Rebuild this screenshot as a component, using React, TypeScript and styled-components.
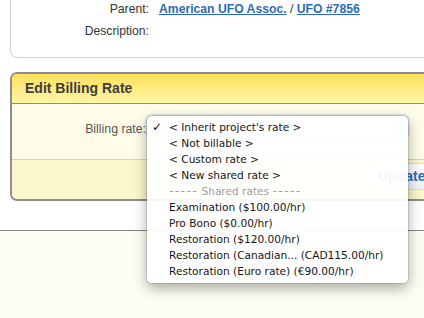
import React from 'react';
import styled, {createGlobalStyle} from 'styled-components';

const GlobalStyle = createGlobalStyle`
	html, body {
		margin: 0;
		padding: 0;
		background: #fdfdf3;
	}
	body {
		font-family: "Liberation Sans", Arial, sans-serif;
	}
`;

const rates = [
	{label: '< Inherit project\'s rate >', checked: true},
	{label: '< Not billable >'},
	{label: '< Custom rate >'},
	{label: '< New shared rate >'},
	{label: 'Shared rates', disabled: true},
	{label: 'Examination ($100.00/hr)'},
	{label: 'Pro Bono ($0.00/hr)'},
	{label: 'Restoration ($120.00/hr)'},
	{label: 'Restoration (Canadian... (CAD115.00/hr)'},
	{label: 'Restoration (Euro rate) (€90.00/hr)'},
];

export default function App() {
	return <Page>
		<GlobalStyle/>
		<Upper>
			<InfoCard>
				<InfoLabel>Parent:</InfoLabel>
				<InfoValue>
					<Link>American UFO Assoc.</Link> / <Link>UFO #7856</Link>
				</InfoValue>
				<InfoLabel>Description:</InfoLabel>
				<InfoValue/>
			</InfoCard>

			<BillingBox>
				<BoxHeader>Edit Billing Rate</BoxHeader>
				<BoxBody>
					<FieldLabel>Billing rate:</FieldLabel>
					<SelectWrap>
						<Select>
							<SelectArrows>⬍</SelectArrows>
						</Select>
						<Popup>
							{rates.map((r) => (
								<Option key={r.label} $disabled={!!r.disabled}>
									{r.checked && <Check>✓</Check>}
									{r.disabled
										? <><Dashes>-----</Dashes> {r.label} <Dashes>-----</Dashes></>
										: r.label}
								</Option>
							))}
						</Popup>
					</SelectWrap>
				</BoxBody>
				<BoxFooter>
					<UpdateButton>Update</UpdateButton>
				</BoxFooter>
			</BillingBox>
		</Upper>
		<Lower/>
	</Page>;
}

const Page = styled.div`
	width: 424px;
	height: 318px;
	overflow: hidden;
	display: flex;
	flex-direction: column;
	background: #fdfdf3;
`

const Upper = styled.div`
	width: 480px;
	background: #fff;
	border-bottom: 1px solid #858585;
	padding: 0 0 29px 10px;
	box-sizing: border-box;
`

const InfoCard = styled.div`
	margin-top: -2px;
	display: grid;
	grid-template-columns: 138px 1fr;
	column-gap: 10px;
	padding-bottom: 15px;
	border: 1px solid #d0d0d0;
	border-top: none;
	border-right: none;
	border-bottom-left-radius: 7px;
	font-size: 12.2px;
	line-height: 22px;
	color: #333;
`

const InfoLabel = styled.div`
	text-align: right;
`

const InfoValue = styled.div`
	white-space: nowrap;
	color: #333;
`

const Link = styled.a`
	color: #2b6cb8;
	font-weight: bold;
	text-decoration: underline;
	cursor: pointer;
`

const BillingBox = styled.div`
	margin-top: 14px;
	border: 2px solid #8c8c8c;
	border-right: none;
	border-radius: 7px 0 0 7px;
`

const BoxHeader = styled.div`
	height: 29px;
	line-height: 29px;
	padding-left: 13px;
	background: linear-gradient(#fce15c, #fff5a6);
	border-bottom: 1px solid #8c8c8c;
	border-top-left-radius: 5px;
	font-size: 14px;
	font-weight: bold;
	color: #3d3d3d;
`

const BoxBody = styled.div`
	display: flex;
	align-items: center;
	padding: 12px 0 22px;
	background: #fffde9;
	border-bottom: 1px solid #d2d2c4;
`

const FieldLabel = styled.div`
	width: 134px;
	text-align: right;
	font-size: 12.3px;
	color: #555;
	padding-top: 5px;
`

const SelectWrap = styled.div`
	position: relative;
	margin-left: 1px;
`

const Select = styled.div`
	width: 261px;
	height: 21px;
	box-sizing: border-box;
	border: 1px solid #a9c5ea;
	border-radius: 5px;
	background: #fff;
	box-shadow: 0 0 0 2px rgba(140, 180, 230, 0.3);
	display: flex;
	align-items: center;
	justify-content: flex-end;
	padding-right: 7px;
`

const SelectArrows = styled.span`
	font-size: 9px;
	color: #c4c4c4;
`

const Popup = styled.div`
	position: absolute;
	top: 0;
	left: 0;
	z-index: 2;
	width: 261px;
	box-sizing: border-box;
	padding: 3px 0 4px;
	background: rgba(255, 255, 255, 0.94);
	border-radius: 5px;
	box-shadow: 0 0 0 1px rgba(0, 0, 0, 0.1), 0 5px 14px rgba(0, 0, 0, 0.35);
	font-family: "DejaVu Sans", sans-serif;
	font-size: 10.6px;
`

const Option = styled.div<{$disabled: boolean}>`
	position: relative;
	height: 16px;
	line-height: 16px;
	padding-left: 22px;
	white-space: nowrap;
	color: ${(p) => (p.$disabled ? '#a0a0a0' : '#151515')};
`

const Dashes = styled.span`
	font-size: 12.5px;
	letter-spacing: 1.3px;
`

const Check = styled.span`
	position: absolute;
	left: 5px;
	top: 0;
	font-size: 12px;
	font-weight: bold;
	color: #111;
`

const BoxFooter = styled.div`
	display: flex;
	padding: 3px 0 9px 357px;
	background: #fcf6cd;
	border-bottom-left-radius: 5px;
`

const UpdateButton = styled.div`
	flex-shrink: 0;
	height: 27px;
	line-height: 25px;
	box-sizing: border-box;
	padding: 0 8px;
	border: 1px solid #d3dbe5;
	border-radius: 13px;
	background: linear-gradient(#ffffff, #eef2f6);
	font-size: 14px;
	font-weight: bold;
	color: #2e6cb5;
	white-space: nowrap;
`

const Lower = styled.div`
	flex: 1;
	background: #fdfdf3;
`
